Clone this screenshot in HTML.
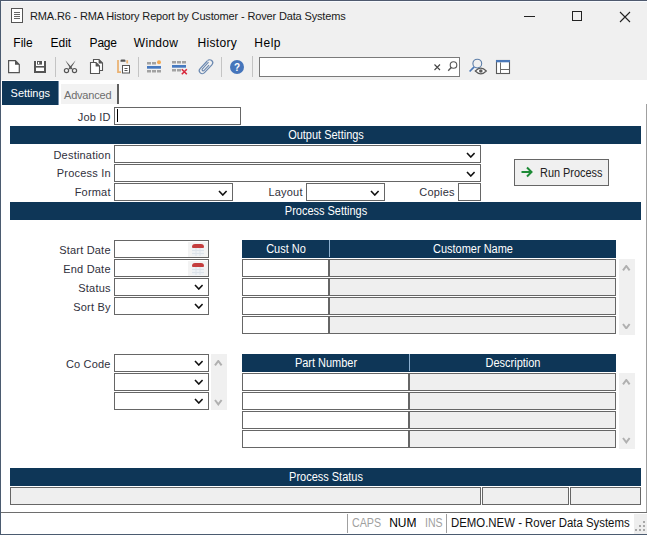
<!DOCTYPE html>
<html><head><meta charset="utf-8"><style>
html,body{margin:0;padding:0;}
body{width:647px;height:535px;position:relative;overflow:hidden;background:#fff;font-family:"Liberation Sans",sans-serif;}
.r{position:absolute;box-sizing:border-box;}
.t{position:absolute;white-space:pre;}
</style></head><body>
<div class="r" style="left:0px;top:0px;width:647px;height:80px;background:#f0f0f0;"></div>
<div class="r" style="left:0px;top:1px;width:647px;height:1px;background:#f8fbff;"></div>
<div class="r" style="left:0px;top:0px;width:647px;height:1px;background:#4f5a6e;"></div>
<div class="r" style="left:0px;top:0px;width:1px;height:535px;background:#4b5b70;"></div>
<div class="r" style="left:0px;top:534px;width:647px;height:1px;background:#4b5b70;"></div>
<svg class="r" style="left:10px;top:7px" width="14" height="17" viewBox="0 0 14 17"><rect x="1.5" y="1.5" width="11" height="14" fill="#fff" stroke="#555" stroke-width="1"/><path d="M4 5.5h6M4 7.5h6M4 9.5h6M4 11.5h6" stroke="#666" stroke-width="1"/></svg>
<div class="t" style="left:30px;top:10.69px;font-size:11px;line-height:11px;color:#1a1a1a;letter-spacing:-0.15px;">RMA.R6 - RMA History Report by Customer - Rover Data Systems</div>
<div class="r" style="left:524px;top:16px;width:11px;height:1px;background:#222;"></div>
<div class="r" style="left:572px;top:11px;width:10px;height:10px;border:1px solid #222"></div>
<svg class="r" style="left:619px;top:11px" width="12" height="12" viewBox="0 0 12 12"><path d="M1 1L11 11M11 1L1 11" stroke="#222" stroke-width="1.1"/></svg>
<div class="t" style="left:13.3px;top:36.84px;font-size:12px;line-height:12px;color:#000;letter-spacing:0px;">File</div>
<div class="t" style="left:50.5px;top:36.84px;font-size:12px;line-height:12px;color:#000;letter-spacing:0px;">Edit</div>
<div class="t" style="left:89.6px;top:36.84px;font-size:12px;line-height:12px;color:#000;letter-spacing:-0.2px;">Page</div>
<div class="t" style="left:133.8px;top:36.84px;font-size:12px;line-height:12px;color:#000;letter-spacing:0.3px;">Window</div>
<div class="t" style="left:197.6px;top:36.84px;font-size:12px;line-height:12px;color:#000;letter-spacing:0.3px;">History</div>
<div class="t" style="left:254.3px;top:36.84px;font-size:12px;line-height:12px;color:#000;letter-spacing:0.5px;">Help</div>

<svg class="r" style="left:0;top:54px" width="647" height="26" viewBox="0 54 647 26">
 <!-- new doc -->
 <path d="M8.6 60.6h6.8l3.9 3.9v8.1h-10.7z" fill="#fff" stroke="#555" stroke-width="1.2"/>
 <path d="M15 60.2v4.6h4.6z" fill="#555"/>
 <!-- save -->
 <path d="M34 61h12v12h-12z" fill="#555"/>
 <rect x="36" y="61" width="8" height="5" fill="#fff"/>
 <rect x="37" y="61" width="5" height="3.6" fill="#555"/>
 <rect x="38" y="62" width="1.2" height="2" fill="#fff"/>
 <rect x="36" y="67.6" width="8" height="3.4" fill="#fff"/>
 <!-- sep -->
 <rect x="55" y="57" width="1" height="20" fill="#c4c4c4"/>
 <!-- scissors -->
 <path d="M65.3 60.2L72.6 68.4L71 69.6L67.2 63.6z" fill="#555"/>
 <path d="M75.7 60.2L68.4 68.4L70 69.6L73.8 63.6z" fill="#555"/>
 <circle cx="66.5" cy="70.6" r="2.1" fill="none" stroke="#555" stroke-width="1.2"/>
 <circle cx="74.5" cy="70.6" r="2.1" fill="none" stroke="#555" stroke-width="1.2"/>
 <!-- copy -->
 <path d="M93.5 59.5h5.5l3.5 3.5v7.5h-9z" fill="#fff" stroke="#555" stroke-width="1.1" stroke-linejoin="miter"/>
 <path d="M98.6 59v4.4h4.4z" fill="#555"/>
 <path d="M90.5 62.5h5.5l3.5 3.5v7.5h-9z" fill="#fff" stroke="#555" stroke-width="1.1" stroke-linejoin="miter"/>
 <path d="M95.6 62v4.4h4.4z" fill="#555"/>
 <!-- paste -->
 <path d="M118 60v12.2h3" fill="none" stroke="#eab374" stroke-width="1.8"/>
 <path d="M127.2 60.2v3.2" fill="none" stroke="#eab374" stroke-width="1.8"/>
 <path d="M120.5 61.8v-1.2a1.2 1.2 0 0 1 1.2 -1.2h2.6a1.2 1.2 0 0 1 1.2 1.2v1.2z" fill="#555"/>
 <rect x="122.5" y="65.5" width="7" height="7.5" fill="#fff" stroke="#555" stroke-width="1"/>
 <path d="M124.5 68.5h3M124.5 70.5h3" stroke="#555" stroke-width="1"/>
 <!-- sep -->
 <rect x="138" y="57" width="1" height="20" fill="#c4c4c4"/>
 <!-- grid icon 1 -->
 <rect x="147" y="62" width="4" height="2.5" fill="#a2a2a2"/>
 <rect x="152" y="62" width="4" height="2.5" fill="#a2a2a2"/>
 <circle cx="159" cy="62.3" r="2" fill="#f2aa55"/>
 <rect x="147" y="66" width="14" height="2.7" fill="#4679c0"/>
 <rect x="147" y="70" width="4" height="2.5" fill="#a2a2a2"/>
 <rect x="152" y="70" width="4" height="2.5" fill="#a2a2a2"/>
 <rect x="157" y="70" width="4" height="2.5" fill="#a2a2a2"/>
 <!-- grid icon 2 -->
 <rect x="172" y="61" width="4" height="2.5" fill="#a2a2a2"/>
 <rect x="177" y="61" width="4" height="2.5" fill="#a2a2a2"/>
 <rect x="182" y="61" width="4" height="2.5" fill="#a2a2a2"/>
 <rect x="172" y="65" width="14" height="2.7" fill="#4679c0"/>
 <rect x="172" y="69" width="4" height="2.5" fill="#a2a2a2"/>
 <rect x="177" y="69" width="4" height="2.5" fill="#a2a2a2"/>
 <path d="M181.8 69.2l5 5M186.8 69.2l-5 5" stroke="#d8283c" stroke-width="1.6"/>
 <!-- paperclip -->
 <g transform="translate(206,66.7) rotate(43)">
  <path d="M-3 -5V5.4A3 3 0 0 0 3 5.4V-5.4A3 3 0 0 0 -3 -5.4" fill="none" stroke="#6a88b0" stroke-width="1.2"/>
  <path d="M1.2 -3.2V4A1.2 1.2 0 0 1 -1.2 4V-5" fill="none" stroke="#6a88b0" stroke-width="1.1"/>
 </g>
 <!-- sep -->
 <rect x="221" y="57" width="1" height="20" fill="#c4c4c4"/>
 <!-- help -->
 <circle cx="237" cy="67" r="7" fill="#4575bb"/>
 <text x="237" y="71" font-family="Liberation Sans" font-size="10" font-weight="bold" fill="#fff" text-anchor="middle">?</text>
 <!-- sep -->
 <rect x="252" y="56" width="1" height="21" fill="#c4c4c4"/>
 <!-- search box -->
 <rect x="259.5" y="57.5" width="200" height="19" fill="#fff" stroke="#7a7a7a" stroke-width="1"/>
 <path d="M434.5 64.5l5.5 5.5M440 64.5l-5.5 5.5" stroke="#444" stroke-width="1.1"/>
 <circle cx="453.5" cy="65" r="3.3" fill="none" stroke="#555" stroke-width="1.1"/>
 <path d="M451.2 67.5l-3 3.2" stroke="#555" stroke-width="1.3"/>
 <!-- search-eye -->
 <circle cx="477.3" cy="63.6" r="4.4" fill="none" stroke="#5d7ea8" stroke-width="1.1"/>
 <path d="M474.2 66.9l-4.6 4.6" stroke="#4a78b8" stroke-width="1.7"/>
 <path d="M475.3 71q5.5-5.6 11 0q-5.5 5.6-11 0z" fill="#fff" stroke="#5a5a5a" stroke-width="1.2"/>
 <circle cx="480.8" cy="71" r="1.8" fill="#5a5a5a"/>
 <!-- layout icon -->
 <rect x="496.5" y="60.5" width="13" height="13" fill="#fff" stroke="#5a5a5a" stroke-width="1.1"/>
 <rect x="496" y="60" width="14" height="2.3" fill="#4a78b8"/>
 <path d="M500.5 62.5v11M500.5 69.5h9" stroke="#6a6a6a" stroke-width="1"/>
</svg>
<div class="r" style="left:2px;top:81px;width:56px;height:24px;background:#0e3657;"></div>
<div class="r" style="left:58px;top:81px;width:1px;height:24px;background:#7590ab;"></div>
<div class="t" style="left:10.6px;top:87.69px;font-size:11px;line-height:11px;color:#fff;letter-spacing:-0.05px;">Settings</div>
<div class="r" style="left:61px;top:84px;width:56px;height:20px;background:#f2f2f2;"></div>
<div class="t" style="left:64px;top:89.69px;font-size:11px;line-height:11px;color:#6d6d6d;letter-spacing:-0.2px;">Advanced</div>
<div class="r" style="left:117px;top:84px;width:2px;height:20px;background:#5e5e5e;"></div>
<div class="r" style="left:646px;top:104px;width:1px;height:409px;background:#a0a0a0;"></div>
<div class="t" style="right:536.3px;top:111.69px;font-size:11px;line-height:11px;color:#30303c;letter-spacing:0.2px;">Job ID</div>
<div class="r" style="left:114px;top:107px;width:127px;height:18px;background:#fff;border:1px solid #666666;box-sizing:border-box;"></div>
<div class="r" style="left:117px;top:109px;width:1px;height:13px;background:#000;"></div>
<div class="r" style="left:10px;top:126px;width:631px;height:18px;background:#0e3657;"></div>
<div class="t" style="left:325.5px;top:128.84px;font-size:12px;line-height:12px;color:#fff;transform:translateX(-50%) scaleX(0.915);">Output Settings</div>
<div class="r" style="left:10px;top:202px;width:631px;height:18px;background:#0e3657;"></div>
<div class="t" style="left:325.5px;top:204.84px;font-size:12px;line-height:12px;color:#fff;transform:translateX(-50%) scaleX(0.915);">Process Settings</div>
<div class="r" style="left:10px;top:468px;width:631px;height:18px;background:#0e3657;"></div>
<div class="t" style="left:325.5px;top:470.84px;font-size:12px;line-height:12px;color:#fff;transform:translateX(-50%) scaleX(0.915);">Process Status</div>
<div class="t" style="right:536.3px;top:149.69px;font-size:11px;line-height:11px;color:#30303c;letter-spacing:0.2px;">Destination</div>
<div class="r" style="left:114px;top:145px;width:367px;height:18px;background:#fff;border:1px solid #666666;box-sizing:border-box;"></div>
<svg class="r" style="left:465.7px;top:151.5px" width="9.6" height="6" viewBox="0 0 9.6 6"><path d="M1 1L4.8 5L8.6 1" fill="none" stroke="#111" stroke-width="1.6"/></svg>
<div class="t" style="right:536.3px;top:167.69px;font-size:11px;line-height:11px;color:#30303c;letter-spacing:0.2px;">Process In</div>
<div class="r" style="left:114px;top:164px;width:367px;height:18px;background:#fff;border:1px solid #666666;box-sizing:border-box;"></div>
<svg class="r" style="left:465.7px;top:170.5px" width="9.6" height="6" viewBox="0 0 9.6 6"><path d="M1 1L4.8 5L8.6 1" fill="none" stroke="#111" stroke-width="1.6"/></svg>
<div class="t" style="right:536.3px;top:186.69px;font-size:11px;line-height:11px;color:#30303c;letter-spacing:0.2px;">Format</div>
<div class="r" style="left:114px;top:183px;width:119px;height:18px;background:#fff;border:1px solid #666666;box-sizing:border-box;"></div>
<svg class="r" style="left:218.2px;top:189.5px" width="9.6" height="6" viewBox="0 0 9.6 6"><path d="M1 1L4.8 5L8.6 1" fill="none" stroke="#111" stroke-width="1.6"/></svg>
<div class="t" style="right:344.3px;top:186.69px;font-size:11px;line-height:11px;color:#30303c;letter-spacing:0.2px;">Layout</div>
<div class="r" style="left:306px;top:183px;width:79px;height:18px;background:#fff;border:1px solid #666666;box-sizing:border-box;"></div>
<svg class="r" style="left:370.2px;top:189.5px" width="9.6" height="6" viewBox="0 0 9.6 6"><path d="M1 1L4.8 5L8.6 1" fill="none" stroke="#111" stroke-width="1.6"/></svg>
<div class="t" style="right:192.3px;top:186.69px;font-size:11px;line-height:11px;color:#30303c;letter-spacing:0.2px;">Copies</div>
<div class="r" style="left:458px;top:183px;width:23px;height:18px;background:#fff;border:1px solid #666666;box-sizing:border-box;"></div>
<div class="r" style="left:514px;top:159px;width:95px;height:27px;background:#f0f0f0;border:1px solid #666666;box-sizing:border-box;"></div>
<svg class="r" style="left:520px;top:166px" width="14" height="12" viewBox="0 0 14 12"><path d="M1.5 6h10M7 1.5L11.5 6L7 10.5" fill="none" stroke="#1d8a36" stroke-width="2"/></svg>
<div class="t" style="left:539.6px;top:166.84px;font-size:12px;line-height:12px;color:#222;transform:scaleX(0.91);transform-origin:0 0;">Run Process</div>
<div class="t" style="right:536.3px;top:244.69px;font-size:11px;line-height:11px;color:#30303c;letter-spacing:0.2px;">Start Date</div>
<div class="r" style="left:114px;top:240px;width:95px;height:18px;background:#fff;border:1px solid #666666;box-sizing:border-box;"></div>
<div class="t" style="right:536.3px;top:263.69px;font-size:11px;line-height:11px;color:#30303c;letter-spacing:0.2px;">End Date</div>
<div class="r" style="left:114px;top:259px;width:95px;height:18px;background:#fff;border:1px solid #666666;box-sizing:border-box;"></div>
<div class="t" style="right:536.3px;top:282.69px;font-size:11px;line-height:11px;color:#30303c;letter-spacing:0.2px;">Status</div>
<div class="r" style="left:114px;top:278px;width:95px;height:18px;background:#fff;border:1px solid #666666;box-sizing:border-box;"></div>
<div class="t" style="right:536.3px;top:301.69px;font-size:11px;line-height:11px;color:#30303c;letter-spacing:0.2px;">Sort By</div>
<div class="r" style="left:114px;top:297px;width:95px;height:18px;background:#fff;border:1px solid #666666;box-sizing:border-box;"></div>
<div class="r" style="left:188px;top:242px;width:20px;height:15px;background:#f3f3f3;"></div>
<div class="r" style="left:192px;top:244px;width:12px;height:4px;background:#c43d3d;border-radius:3px 3px 1px 1px;"></div>
<svg class="r" style="left:192px;top:248px" width="12" height="8" viewBox="0 0 12 8"><rect x="0" y="0" width="12" height="8" fill="#eef1f4"/><path d="M0 2.5h12M0 5.5h12M4 0v8M8 0v8" stroke="#dce2e9" stroke-width="1"/></svg>
<div class="r" style="left:188px;top:261px;width:20px;height:15px;background:#f3f3f3;"></div>
<div class="r" style="left:192px;top:263px;width:12px;height:4px;background:#c43d3d;border-radius:3px 3px 1px 1px;"></div>
<svg class="r" style="left:192px;top:267px" width="12" height="8" viewBox="0 0 12 8"><rect x="0" y="0" width="12" height="8" fill="#eef1f4"/><path d="M0 2.5h12M0 5.5h12M4 0v8M8 0v8" stroke="#dce2e9" stroke-width="1"/></svg>
<svg class="r" style="left:193.7px;top:284.0px" width="9.6" height="6" viewBox="0 0 9.6 6"><path d="M1 1L4.8 5L8.6 1" fill="none" stroke="#111" stroke-width="1.6"/></svg>
<svg class="r" style="left:193.7px;top:303.0px" width="9.6" height="6" viewBox="0 0 9.6 6"><path d="M1 1L4.8 5L8.6 1" fill="none" stroke="#111" stroke-width="1.6"/></svg>
<div class="r" style="left:242px;top:240px;width:374px;height:18px;background:#0e3657;"></div>
<div class="r" style="left:329px;top:240px;width:1px;height:17px;background:#8db0d0;"></div>
<div class="t" style="left:285.5px;top:242.84px;font-size:12px;line-height:12px;color:#fff;transform:translateX(-50%) scaleX(0.915);">Cust No</div>
<div class="t" style="left:472.5px;top:242.84px;font-size:12px;line-height:12px;color:#fff;transform:translateX(-50%) scaleX(0.915);">Customer Name</div>
<div class="r" style="left:242px;top:259px;width:87px;height:18px;background:#fff;border:1px solid #666666;box-sizing:border-box;"></div>
<div class="r" style="left:329px;top:259px;width:287px;height:18px;background:#efefef;border:1px solid #666666;box-sizing:border-box;"></div>
<div class="r" style="left:242px;top:278px;width:87px;height:18px;background:#fff;border:1px solid #666666;box-sizing:border-box;"></div>
<div class="r" style="left:329px;top:278px;width:287px;height:18px;background:#efefef;border:1px solid #666666;box-sizing:border-box;"></div>
<div class="r" style="left:242px;top:297px;width:87px;height:18px;background:#fff;border:1px solid #666666;box-sizing:border-box;"></div>
<div class="r" style="left:329px;top:297px;width:287px;height:18px;background:#efefef;border:1px solid #666666;box-sizing:border-box;"></div>
<div class="r" style="left:242px;top:316px;width:87px;height:18px;background:#fff;border:1px solid #666666;box-sizing:border-box;"></div>
<div class="r" style="left:329px;top:316px;width:287px;height:18px;background:#efefef;border:1px solid #666666;box-sizing:border-box;"></div>
<div class="r" style="left:619px;top:259px;width:16px;height:76px;background:#f0f0f0;"></div>
<svg class="r" style="left:622.2px;top:264.8px" width="8.6" height="6.4" viewBox="0 0 8.6 6.4"><path d="M1 5.4L4.3 1L7.6 5.4" fill="none" stroke="#b0b0b0" stroke-width="2.0"/></svg>
<svg class="r" style="left:622.2px;top:322.8px" width="8.6" height="6.4" viewBox="0 0 8.6 6.4"><path d="M1 1L4.3 5.4L7.6 1" fill="none" stroke="#b0b0b0" stroke-width="2.0"/></svg>
<div class="t" style="right:536.3px;top:358.69px;font-size:11px;line-height:11px;color:#30303c;letter-spacing:0.2px;">Co Code</div>
<div class="r" style="left:114px;top:354px;width:95px;height:18px;background:#fff;border:1px solid #666666;box-sizing:border-box;"></div>
<svg class="r" style="left:193.7px;top:360.0px" width="9.6" height="6" viewBox="0 0 9.6 6"><path d="M1 1L4.8 5L8.6 1" fill="none" stroke="#111" stroke-width="1.6"/></svg>
<div class="r" style="left:114px;top:373px;width:95px;height:18px;background:#fff;border:1px solid #666666;box-sizing:border-box;"></div>
<svg class="r" style="left:193.7px;top:379.0px" width="9.6" height="6" viewBox="0 0 9.6 6"><path d="M1 1L4.8 5L8.6 1" fill="none" stroke="#111" stroke-width="1.6"/></svg>
<div class="r" style="left:114px;top:392px;width:95px;height:18px;background:#fff;border:1px solid #666666;box-sizing:border-box;"></div>
<svg class="r" style="left:193.7px;top:398.0px" width="9.6" height="6" viewBox="0 0 9.6 6"><path d="M1 1L4.8 5L8.6 1" fill="none" stroke="#111" stroke-width="1.6"/></svg>
<div class="r" style="left:211px;top:354px;width:16px;height:56px;background:#f0f0f0;"></div>
<svg class="r" style="left:214.2px;top:359.8px" width="8.6" height="6.4" viewBox="0 0 8.6 6.4"><path d="M1 5.4L4.3 1L7.6 5.4" fill="none" stroke="#b0b0b0" stroke-width="2.0"/></svg>
<svg class="r" style="left:214.2px;top:399.3px" width="8.6" height="6.4" viewBox="0 0 8.6 6.4"><path d="M1 1L4.3 5.4L7.6 1" fill="none" stroke="#b0b0b0" stroke-width="2.0"/></svg>
<div class="r" style="left:242px;top:354px;width:374px;height:18px;background:#0e3657;"></div>
<div class="r" style="left:409px;top:354px;width:1px;height:17px;background:#8db0d0;"></div>
<div class="t" style="left:325.5px;top:356.84px;font-size:12px;line-height:12px;color:#fff;transform:translateX(-50%) scaleX(0.915);">Part Number</div>
<div class="t" style="left:512.5px;top:356.84px;font-size:12px;line-height:12px;color:#fff;transform:translateX(-50%) scaleX(0.915);">Description</div>
<div class="r" style="left:242px;top:373px;width:167px;height:18px;background:#fff;border:1px solid #666666;box-sizing:border-box;"></div>
<div class="r" style="left:409px;top:373px;width:207px;height:18px;background:#efefef;border:1px solid #666666;box-sizing:border-box;"></div>
<div class="r" style="left:242px;top:392px;width:167px;height:18px;background:#fff;border:1px solid #666666;box-sizing:border-box;"></div>
<div class="r" style="left:409px;top:392px;width:207px;height:18px;background:#efefef;border:1px solid #666666;box-sizing:border-box;"></div>
<div class="r" style="left:242px;top:411px;width:167px;height:18px;background:#fff;border:1px solid #666666;box-sizing:border-box;"></div>
<div class="r" style="left:409px;top:411px;width:207px;height:18px;background:#efefef;border:1px solid #666666;box-sizing:border-box;"></div>
<div class="r" style="left:242px;top:430px;width:167px;height:18px;background:#fff;border:1px solid #666666;box-sizing:border-box;"></div>
<div class="r" style="left:409px;top:430px;width:207px;height:18px;background:#efefef;border:1px solid #666666;box-sizing:border-box;"></div>
<div class="r" style="left:619px;top:373px;width:16px;height:76px;background:#f0f0f0;"></div>
<svg class="r" style="left:622.2px;top:378.8px" width="8.6" height="6.4" viewBox="0 0 8.6 6.4"><path d="M1 5.4L4.3 1L7.6 5.4" fill="none" stroke="#b0b0b0" stroke-width="2.0"/></svg>
<svg class="r" style="left:622.2px;top:437.3px" width="8.6" height="6.4" viewBox="0 0 8.6 6.4"><path d="M1 1L4.3 5.4L7.6 1" fill="none" stroke="#b0b0b0" stroke-width="2.0"/></svg>
<div class="r" style="left:10px;top:487px;width:471px;height:18px;background:#efefef;border:1px solid #666666;box-sizing:border-box;"></div>
<div class="r" style="left:482px;top:487px;width:87px;height:18px;background:#efefef;border:1px solid #666666;box-sizing:border-box;"></div>
<div class="r" style="left:570px;top:487px;width:71px;height:18px;background:#efefef;border:1px solid #666666;box-sizing:border-box;"></div>
<div class="r" style="left:1px;top:512px;width:646px;height:1px;background:#6e6e6e;"></div>
<div class="r" style="left:1px;top:513px;width:646px;height:21px;background:#ffffff;"></div>
<div class="r" style="left:347px;top:514px;width:1px;height:19px;background:#a0a0a0;"></div>
<div class="r" style="left:446px;top:514px;width:1px;height:19px;background:#a0a0a0;"></div>
<div class="t" style="left:351.5px;top:516.84px;font-size:12px;line-height:12px;color:#a0a0a0;transform:scaleX(0.89);transform-origin:0 0;">CAPS</div>
<div class="t" style="left:389.2px;top:516.84px;font-size:12px;line-height:12px;color:#000;transform:scaleX(1.0);transform-origin:0 0;">NUM</div>
<div class="t" style="left:424.5px;top:516.84px;font-size:12px;line-height:12px;color:#a0a0a0;transform:scaleX(0.88);transform-origin:0 0;">INS</div>
<div class="t" style="left:451.3px;top:516.84px;font-size:12px;line-height:12px;color:#111;transform:scaleX(0.95);transform-origin:0 0;">DEMO.NEW - Rover Data Systems</div>
<div class="r" style="left:634px;top:514px;width:13px;height:20px;background:#eeeeee;"></div>
<div class="r" style="left:643px;top:521px;width:2px;height:2px;background:#a8a8a8;"></div>
<div class="r" style="left:639px;top:525px;width:2px;height:2px;background:#a8a8a8;"></div>
<div class="r" style="left:643px;top:525px;width:2px;height:2px;background:#a8a8a8;"></div>
<div class="r" style="left:635px;top:529px;width:2px;height:2px;background:#a8a8a8;"></div>
<div class="r" style="left:639px;top:529px;width:2px;height:2px;background:#a8a8a8;"></div>
<div class="r" style="left:643px;top:529px;width:2px;height:2px;background:#a8a8a8;"></div>
</body></html>
